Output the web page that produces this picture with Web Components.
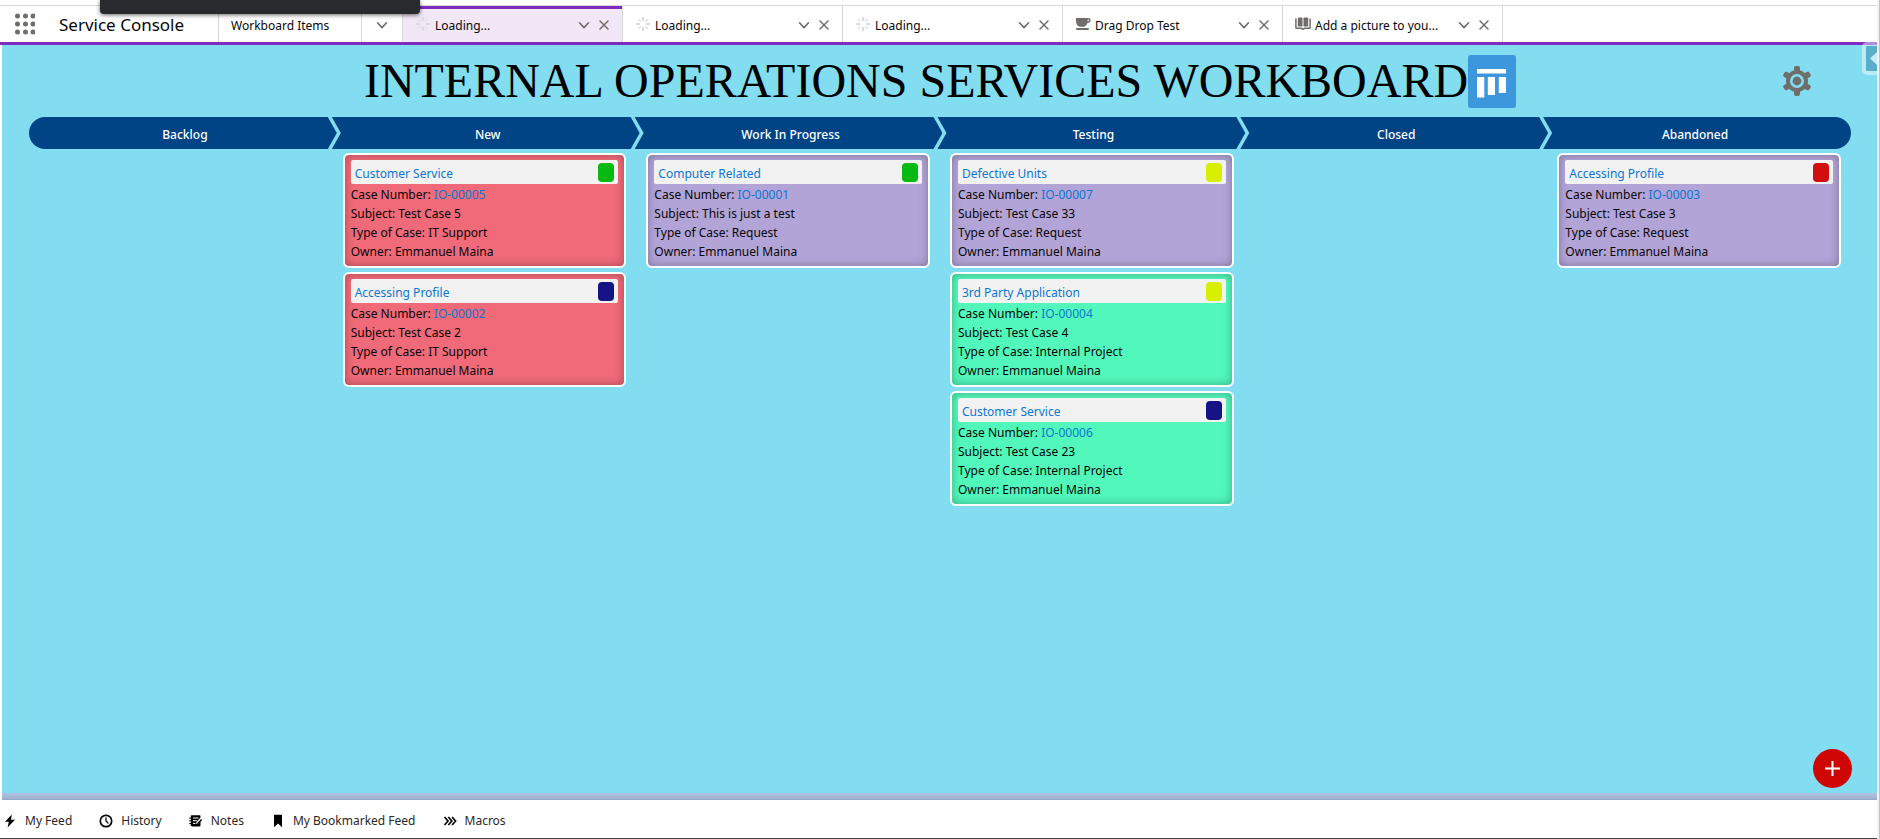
<!DOCTYPE html>
<html lang="en">
<head>
<meta charset="utf-8">
<title>Service Console</title>
<style>
  html, body { margin: 0; }
  body { font: 12px/18px "Noto Sans", "Open Sans", sans-serif; color: #080707; background: #fff; }
</style>
</head>
<body>
<service-console>
  <console-header slot="header" app="Service Console">
    <console-tab kind="nav" label="Workboard Items"></console-tab>
    <console-tab kind="menu" label="Show navigation menu"></console-tab>
    <console-tab icon="spinner" label="Loading..." active></console-tab>
    <console-tab icon="spinner" label="Loading..."></console-tab>
    <console-tab icon="spinner" label="Loading..."></console-tab>
    <console-tab icon="cup" label="Drag Drop Test"></console-tab>
    <console-tab icon="book" label="Add a picture to you..."></console-tab>
  </console-header>

  <work-board heading="INTERNAL OPERATIONS SERVICES WORKBOARD">
    <path-stage slot="stages" position="first">Backlog</path-stage>
    <path-stage slot="stages">New</path-stage>
    <path-stage slot="stages">Work In Progress</path-stage>
    <path-stage slot="stages">Testing</path-stage>
    <path-stage slot="stages">Closed</path-stage>
    <path-stage slot="stages" position="last">Abandoned</path-stage>

    <board-column></board-column>
    <board-column>
      <case-card tone="#f06a79" flag="#07ba12" topic="Customer Service" number="IO-00005" subject="Test Case 5" type="IT Support" owner="Emmanuel Maina"></case-card>
      <case-card tone="#f06a79" flag="#141487" topic="Accessing Profile" number="IO-00002" subject="Test Case 2" type="IT Support" owner="Emmanuel Maina"></case-card>
    </board-column>
    <board-column>
      <case-card tone="#b3a4d8" flag="#07ba12" topic="Computer Related" number="IO-00001" subject="This is just a test" type="Request" owner="Emmanuel Maina"></case-card>
    </board-column>
    <board-column>
      <case-card tone="#b3a4d8" flag="#d8f000" topic="Defective Units" number="IO-00007" subject="Test Case 33" type="Request" owner="Emmanuel Maina"></case-card>
      <case-card tone="#52f8bb" flag="#d8f000" topic="3rd Party Application" number="IO-00004" subject="Test Case 4" type="Internal Project" owner="Emmanuel Maina"></case-card>
      <case-card tone="#52f8bb" flag="#141487" topic="Customer Service" number="IO-00006" subject="Test Case 23" type="Internal Project" owner="Emmanuel Maina"></case-card>
    </board-column>
    <board-column></board-column>
    <board-column>
      <case-card tone="#b3a4d8" flag="#cf0f10" topic="Accessing Profile" number="IO-00003" subject="Test Case 3" type="Request" owner="Emmanuel Maina"></case-card>
    </board-column>
  </work-board>

  <utility-bar slot="footer">
    <utility-item icon="bolt">My Feed</utility-item>
    <utility-item icon="clock">History</utility-item>
    <utility-item icon="note">Notes</utility-item>
    <utility-item icon="bookmark">My Bookmarked Feed</utility-item>
    <utility-item icon="macro">Macros</utility-item>
  </utility-bar>
</service-console>

<script>
const icons = {
  spinner: `<svg width="16" height="16" viewBox="0 0 16 16" stroke="#dcdce0" stroke-width="2"><path d="M8 1v4M8 11v4M1 8h4M11 8h4"/><path d="M3.2 3.2l2.6 2.6M10.2 10.2l2.6 2.6M12.8 3.2l-2.6 2.6M5.8 10.2l-2.6 2.6" stroke="#e6e6ea"/></svg>`,
  cup: `<svg width="16" height="16" viewBox="0 0 16 16" fill="#706e6b"><path d="M1 2h12c1.700 0 2.600.9 2.600 2.300C15.600 6 14.400 7 12.300 7.200 11.700 9 10.500 10.500 8.800 10.800H4.600C2.400 10.200 1 8 1 5z"/><path d="M12.700 3.600h.7c.9 0 .9 1.800-.8 2z" fill="#fff"/><rect x="1" y="12" width="13" height="2" rx="1"/></svg>`,
  book: `<svg width="16" height="16" viewBox="0 0 16 16"><path fill="#706e6b" d="M3.500 1.500h3.200c.5 0 .8.3.8.8v8.200H2.800V2.200c0-.4.3-.7.7-.7zM9.300 1.500h3.200c.4 0 .7.3.7.700v8.300H8.500V2.300c0-.5.3-.8.8-.8z"/><path fill="none" stroke="#706e6b" stroke-width="1.500" stroke-linecap="round" stroke-linejoin="round" d="M.9 3v8.700c0 .4.200.6.6.6h5l1.500 1 1.500-1h5c.4 0 .6-.2.6-.6V3"/></svg>`,
  chevron: `<svg width="12" height="12" viewBox="0 0 12 12" fill="none" stroke="#706e6b" stroke-width="1.600" stroke-linecap="round" stroke-linejoin="round"><path d="M1.500 3.800L6 8.600l4.500-4.800"/></svg>`,
  close: `<svg width="12" height="12" viewBox="0 0 12 12" fill="none" stroke="#706e6b" stroke-width="1.500" stroke-linecap="round"><path d="M2 2l8 8M10 2l-8 8"/></svg>`,
  bolt: `<svg width="14" height="14" viewBox="0 0 14 14"><path d="M8.800.5L2 7.800h3.800L4.600 13.500 12 5.800H8z"/></svg>`,
  clock: `<svg width="14" height="14" viewBox="0 0 14 14" fill="none" stroke="#080707"><circle cx="7" cy="7" r="5.700" stroke-width="1.700"/><path d="M7 3.800V7l2 2" stroke-width="1.300" stroke-linecap="round"/></svg>`,
  note: `<svg width="14" height="14" viewBox="0 0 14 14"><path d="M3 1.200h7.500c.7 0 1 .3 1 1v1.300L7.500 8l-.4 2 2-.5 2.400-2.300v4c0 .8-.4 1.200-1.200 1.200H3c-.8 0-1.200-.4-1.200-1.200V2.200c0-.6.4-1 1.200-1z"/><path d="M12.200 5l1 1-3.800 3.700-1.200.3.300-1.200z"/><path d="M4 4h5.500M4 6.700h3.800M4 9.400h2.400" stroke="#fff"/><path d="M.6 4h2.200M.6 6.800h2.200M.6 9.600h2.200" stroke="#080707" stroke-linecap="round"/></svg>`,
  bookmark: `<svg width="14" height="14" viewBox="0 0 14 14"><path d="M3.500.8h7c.3 0 .5.2.5.5v12L7 9.600l-4 3.700v-12c0-.3.200-.5.5-.5z"/></svg>`,
  macro: `<svg width="14" height="14" viewBox="0 0 14 14" fill="none" stroke="#080707" stroke-width="1.700"><path d="M1.500 3l3.500 4-3.500 4M5.300 3l3.500 4-3.500 4M9.100 3l3.500 4-3.500 4"/></svg>`
};

function define(name, render) {
  customElements.define(name, class extends HTMLElement {
    constructor() { super(); this.attachShadow({ mode: "open" }); }
    connectedCallback() {
      const t = document.createElement("template");
      t.innerHTML = render(this);
      this.shadowRoot.replaceChildren(t.content.cloneNode(true));
    }
  });
}

define("service-console", () => `
<style>
  :host { display: flex; min-height: 100vh; position: relative; }
  .page { flex: 1; min-width: 0; display: flex; flex-direction: column; }
  .scroll { width: 2px; border-right: 1px solid #c1c1c1; background: #f1f1f1; }
  .notice { position: absolute; top: 0; left: 100px; width: 320px; height: 14px; background: #292a2d;
    border-radius: 0 0 4px 4px; box-shadow: 0 1px 4px rgba(0,0,0,.6); z-index: 2; }
</style>
<div class="page"><slot name="header"></slot><slot></slot><slot name="footer"></slot></div>
<div class="scroll"></div>
<div class="notice"></div>`);

define("console-header", el => `
<style>
  :host { display: flex; margin-top: 5px; height: 36px; border-top: 1px solid #d8d8d8; border-bottom: 3px solid #7f2bbf; }
  button { border: 0; background: none; padding: 0 0 0 15px; display: flex; align-items: center; }
  .name { display: flex; align-items: center; padding: 2px 0 0 24px; width: 159px; font-size: 17px; line-height: 24px; }
  nav { display: flex; }
</style>
<button aria-label="App launcher"><svg width="20" height="22" viewBox="0 0 20 22" fill="#706e6b">
  ${[3, 11, 19].map(y => [2.500, 10.500, 18].map(x => `<circle cx="${x}" cy="${y}" r="2.500"/>`).join("")).join("")}
</svg></button>
<span class="name">${el.getAttribute("app")}</span>
<nav><slot></slot></nav>`);

define("console-tab", el => {
  const kind = el.getAttribute("kind"), label = el.getAttribute("label"), icon = el.getAttribute("icon");
  const body = kind === "nav" ? `<a href="#">${label}</a>`
    : kind === "menu" ? `<button class="menu" aria-label="${label}">${icons.chevron}</button>`
    : `${icons[icon]}<a href="#">${label}</a><button aria-label="Tab actions">${icons.chevron}</button><button aria-label="Close tab">${icons.close}</button>`;
  return `
<style>
  :host { box-sizing: border-box; display: flex; align-items: center; width: 220px; padding: 0 8px 0 12px; border-right: 1px solid #d8d8d8; }
  :host([kind="nav"]) { width: 144px; padding: 0 12px; border-left: 1px solid #d8d8d8; }
  :host([kind="menu"]) { width: 41px; padding: 0; justify-content: center; }
  :host([active]) { background: #f1e7f7; box-shadow: inset 0 3px #7f2bbf; }
  a { flex: 1; color: inherit; text-decoration: none; white-space: nowrap; padding-top: 3px; }
  svg + a { padding-left: 4px; }
  button { border: 0; background: none; padding: 2px 0 0; width: 20px; height: 24px; display: flex; align-items: center; justify-content: center; }
</style>${body}`;
});

define("work-board", el => `
<style>
  :host { flex: 1; display: flex; flex-direction: column; position: relative; margin-left: 2px;
    padding: 0 26px 0 27px; background: #82ddf0; border-bottom: 1px solid #93a9c4;
    background-image: linear-gradient(#b0c3e0, #9cb2d0); background-size: 100% 6px; background-position: bottom; background-repeat: no-repeat; }
  header { display: grid; grid-template-columns: 1fr auto 1fr; align-items: center; height: 72px; }
  .title { grid-column: 2; display: flex; align-items: center; }
  h1 { margin: 0; font: 400 48px/56px "Liberation Serif", "Times New Roman", serif; color: #000; white-space: nowrap; }
  .gear { justify-self: end; margin-right: 40px; border: 0; padding: 0; background: none; display: flex; }
  .path { display: flex; }
  .columns { display: grid; grid-template-columns: repeat(6, 1fr); margin-top: 4px; }
  .add { position: absolute; right: 25px; bottom: 11px; width: 39px; height: 39px; border: 0; border-radius: 50%; padding: 0; background: #cf0606;
    display: flex; align-items: center; justify-content: center; }
  .drawer { position: absolute; right: 0; top: -3px; width: 15px; height: 33px; border: 4px solid rgba(255,255,255,.45); border-right: 0;
    box-sizing: border-box; border-radius: 5px 0 0 5px; padding: 0; background: #58aec8; background-clip: padding-box; display: flex; align-items: center; justify-content: flex-end; }
</style>
<header>
  <div class="title"><h1>${el.getAttribute("heading")}</h1>
    <svg width="48" height="53" viewBox="0 0 48 53"><rect width="48" height="53" rx="3" fill="#3c97dd"/>
      <path fill="#fff" d="M9 14h29v4.500H9zM9 22h7.300v20.500H9zM19.800 22H27v18h-7.200zM30.800 22H38v16h-7.200z"/></svg>
  </div>
  <button class="gear" aria-label="Settings"><svg width="28" height="30" viewBox="0 0 28 30" fill="#706e6b">
    <circle cx="14" cy="15" r="11"/>
    ${[0, 60, 120, 180, 240, 300].map(a => `<rect x="11" y="0" width="6" height="8" rx="2" transform="rotate(${a} 14 15)"/>`).join("")}
    <circle cx="14" cy="15" r="5.700" fill="#706e6b" stroke="#82ddf0" stroke-width="2.600"/></svg></button>
</header>
<div class="path"><slot name="stages"></slot></div>
<div class="columns"><slot></slot></div>
<button class="add" aria-label="Add case"><svg width="15" height="15" viewBox="0 0 15 15" stroke="#fff" stroke-width="2"><path d="M7.500 0v15M0 7.500h15"/></svg></button>
<button class="drawer" aria-label="Open panel"><svg width="7" height="13" viewBox="0 0 7 13"><path d="M7 0v13L0 6.500z" fill="#c4eef7"/></svg></button>`);

define("path-stage", () => `
<style>
  :host { flex: 1; box-sizing: border-box; height: 32px; margin-left: -5px; display: flex; align-items: center; justify-content: center;
    background: #014486; color: #fff; font-weight: 500; padding: 3px 0 0 4px;
    clip-path: polygon(0 0, calc(100% - 9px) 0, 100% 50%, calc(100% - 9px) 100%, 0 100%, 9px 50%); }
  :host([position="first"]) { margin-left: 0; border-radius: 16px 0 0 16px; clip-path: polygon(0 0, calc(100% - 9px) 0, 100% 50%, calc(100% - 9px) 100%, 0 100%); }
  :host([position="last"]) { padding: 3px 4px 0 0; border-radius: 0 16px 16px 0; clip-path: polygon(0 0, 100% 0, 100% 100%, 0 100%, 9px 50%); }
</style><slot></slot>`);

define("board-column", () => `
<style>
  :host { display: flex; flex-direction: column; gap: 4px; min-width: 0; padding: 0 10px; }
</style><slot></slot>`);

define("case-card", el => {
  const a = n => el.getAttribute(n);
  return `
<style>
  :host { display: block; }
  article { padding: 5px 6px; border: 2px solid #fff; border-radius: 6px; background: ${a("tone")}; box-shadow: inset 0 0 10px rgba(0,0,0,.3); }
  header { display: flex; align-items: center; justify-content: space-between; height: 24px; margin-bottom: 1px; padding: 0 4px; border-radius: 2px; background: #f2f2f2; }
  h2 { margin: 0; padding-top: 3px; font-size: 12px; line-height: 18px; font-weight: 400; }
  i { width: 16px; height: 19px; border-radius: 4px; background: ${a("flag")}; }
  a { color: #0b77d0; text-decoration: none; }
  p { margin: 0; line-height: 19px; white-space: nowrap; }
</style>
<article>
  <header><h2><a href="#">${a("topic")}</a></h2><i></i></header>
  <p>Case Number: <a href="#">${a("number")}</a></p>
  <p>Subject: ${a("subject")}</p>
  <p>Type of Case: ${a("type")}</p>
  <p>Owner: ${a("owner")}</p>
</article>`;
});

define("utility-bar", () => `
<style>
  :host { display: flex; align-items: center; gap: 27px; height: 38px; padding: 4px 3px 0; box-sizing: border-box; background: #fff; margin-bottom: 1px;
    box-shadow: 0 1px #444; }
</style><slot></slot>`);

define("utility-item", el => `
<style>
  :host { display: block; }
  button { display: flex; align-items: center; gap: 8px; border: 0; padding: 0; background: none; font: inherit; color: #2b2826; white-space: nowrap; }
</style><button>${icons[el.getAttribute("icon")]}<span><slot></slot></span></button>`);
</script>
</body>
</html>
